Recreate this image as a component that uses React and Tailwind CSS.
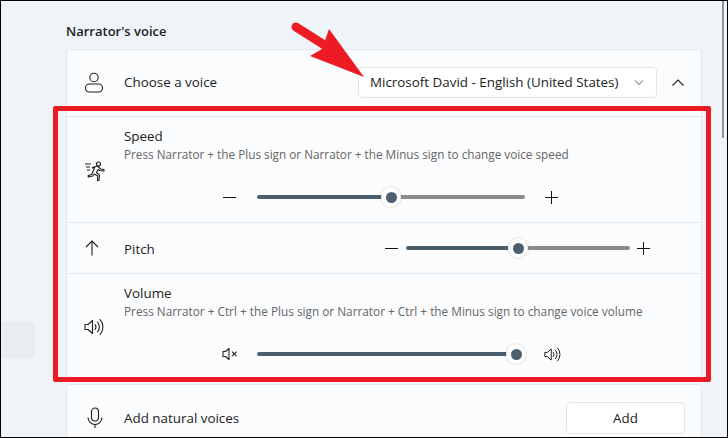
const FONT = "font-['Open_Sans','Noto_Sans',sans-serif]";

function PersonIcon() {
  return (
    <svg width="20" height="22" viewBox="0 0 20 22" fill="none" stroke="#1f1f1f" strokeWidth="1.1">
      <circle cx="10" cy="5.5" r="4.2" />
      <rect x="1.5" y="12" width="17" height="8" rx="4" />
    </svg>
  );
}

function RunIcon() {
  return (
    <svg width="22" height="20" viewBox="0 0 22 20" fill="none" stroke="#1f1f1f" strokeWidth="1.1" strokeLinejoin="round">
      <circle cx="14.5" cy="3" r="2" />
      <path d="M8.500 6.500l5-1.500 3 3 3.500.5v1.500l-4.500-.5-1.500-1-1.500 3 3 2.500-.5 5.500h-1.500l.2-4.500-3.500-2-1.500 2-4.500 1v-1.500l3.500-1 3-7-2.500.5z" />
      <path d="M1 3h6M2 6h4M3 9h3" />
    </svg>
  );
}

function SpeakerIcon({ size = 20, stroke = "#1f1f1f" }) {
  return (
    <svg width={size} height={size} viewBox="0 0 20 20" fill="none" stroke={stroke} strokeWidth="1.100">
      <path d="M1 7.500h3l4.500-4v13l-4.500-4h-3z" strokeLinejoin="round" />
      <path d="M11 7.500a4 4 0 0 1 0 5M13.500 5a7.500 7.500 0 0 1 0 10M16 2.500a11 11 0 0 1 0 15" strokeLinecap="round" />
    </svg>
  );
}

function MuteIcon() {
  return (
    <svg width="16" height="16" viewBox="0 0 16 16" fill="none" stroke="#1f1f1f" strokeWidth="1.100">
      <path d="M1 5.500h2.500L7 2.500v11l-3.500-3H1z" strokeLinejoin="round" />
      <path d="M10 5.700l4.500 4.500M14.500 5.700L10 10.200" />
    </svg>
  );
}

function MicIcon() {
  return (
    <svg width="16" height="22" viewBox="0 0 16 22" fill="none" stroke="#1f1f1f" strokeWidth="1.100">
      <rect x="4.500" y="1" width="7" height="13" rx="3.500" />
      <path d="M1 10.500a7 7 0 0 0 14 0M8 17.500V21" />
    </svg>
  );
}

function Slider({ width, value, fill = "bg-[#4c5f6e]", rest = "bg-[#8b8b8b]" }) {
  return (
    <div className="relative flex h-[22px] shrink-0 items-center" style={{ width }}>
      <div className="flex h-1 w-full overflow-hidden rounded-full">
        <div className={fill} style={{ width: value }} />
        <div className={"flex-1 " + rest} />
      </div>
      <div
        className="absolute top-px flex h-5 w-5 -translate-x-1/2 items-center justify-center rounded-full bg-white shadow-[0_0_2px_rgba(0,0,0,0.25)]"
        style={{ left: value }}
      >
        <div className="h-[11px] w-[11px] rounded-full bg-[#4c5f6e]" />
      </div>
    </div>
  );
}

function Minus() {
  return <div className="h-px w-[13px] shrink-0 bg-[#111]" />;
}

function Plus() {
  return (
    <svg className="shrink-0" width="13" height="13" viewBox="0 0 13 13" stroke="#111" strokeWidth="1">
      <path d="M0 6.500h13M6.500 0v13" />
    </svg>
  );
}

export default function App() {
  return (
    <div className={"relative h-[438px] w-[728px] overflow-hidden border border-black bg-[#eff4f9] " + FONT}>
      {/* sidebar leftover */}
      <div className="absolute left-0 top-[321px] h-9 w-[34px] rounded-r bg-[#e9edf2]" />
      {/* scrollbar */}
      <div className="absolute right-[3px] top-0 h-[137px] w-[2px] bg-[#90969c]" />

      <div className="ml-[65px] mr-[25px] pt-[21px]">
        <h2 className="mb-[9px] text-[13px] leading-[18px] font-semibold text-[#222]">Narrator's voice</h2>

        <div className="rounded border border-[#e3e8ec] bg-[#fbfcfe]">
          {/* choose a voice */}
          <div className="flex h-[66px] items-center pb-[1px] pl-[17px] pr-[15px]">
            <div className="w-10 shrink-0"><PersonIcon /></div>
            <span className="text-[13.4px] text-[#222]">Choose a voice</span>
            <button className="ml-auto flex h-[31px] w-[299px] items-center justify-between rounded border border-[#e5e5e5] bg-white pl-[11px] pr-[12px] text-[13.4px] text-[#222]">
              Microsoft David - English (United States)
              <svg width="10" height="6" viewBox="0 0 10 6" fill="none" stroke="#555" strokeWidth="1"><path d="M1 .5l4 4 4-4" /></svg>
            </button>
            <svg className="ml-[15px] mr-[2px]" width="12" height="7" viewBox="0 0 12 7" fill="none" stroke="#222" strokeWidth="1.100"><path d="M.5 6.500l5.500-5.500 5.500 5.500" /></svg>
          </div>

          {/* speed */}
          <div className="h-[106px] border-t border-[#e3e8ec] pl-[17px] pt-[10px]">
            <div className="flex">
              <div className="w-10 shrink-0 pt-[34px]"><RunIcon /></div>
              <div>
                <div className="text-[13.4px] leading-[18px] text-[#222]">Speed</div>
                <div className="text-[11.75px] leading-[18px] text-[#666]">Press Narrator + the Plus sign or Narrator + the Minus sign to change voice speed</div>
              </div>
            </div>
            <div className="ml-[139px] mt-[5px] flex items-center gap-5">
              <Minus />
              <div className="ml-px"><Slider width={268} value={134} /></div>
              <Plus />
            </div>
          </div>

          {/* pitch */}
          <div className="flex h-[51px] items-center border-t border-[#e3e8ec] pl-[17px] pr-[51px]">
            <div className="w-10 shrink-0 pl-px">
              <svg width="14" height="16" viewBox="0 0 14 16" fill="none" stroke="#1f1f1f" strokeWidth="1.100"><path d="M7 15.500V1M1 7l6-6 6 6" /></svg>
            </div>
            <span className="pt-[2px] text-[13.4px] text-[#222]">Pitch</span>
            <div className="ml-auto flex items-center gap-2">
              <Minus />
              <Slider width={224} value={112} />
              <div className="-ml-px"><Plus /></div>
            </div>
          </div>

          {/* volume */}
          <div className="h-[104px] border-t border-[#e3e8ec] pl-[17px] pt-[10px]">
            <div className="flex">
              <div className="w-10 shrink-0 pt-[33px]"><SpeakerIcon /></div>
              <div>
                <div className="text-[13.4px] leading-[18px] text-[#222]">Volume</div>
                <div className="text-[11.8px] leading-[18px] text-[#666]">Press Narrator + Ctrl + the Plus sign or Narrator + Ctrl + the Minus sign to change voice volume</div>
              </div>
            </div>
            <div className="ml-[138px] mt-[6px] flex items-center">
              <MuteIcon />
              <div className="ml-[19px]"><Slider width={259} value={259} /></div>
              <div className="ml-[28px]"><SpeakerIcon size={17} stroke="#111" /></div>
            </div>
          </div>
        </div>

        {/* natural voices */}
        <div className="mt-[6px] flex h-[70px] items-start rounded-t border border-[#e3e8ec] bg-[#fbfcfe] pl-[20px] pr-[16px] pt-[22px]">
          <div className="w-[37px] shrink-0"><MicIcon /></div>
          <span className="text-[13.4px] leading-[22px] text-[#222]">Add natural voices</span>
          <button className="ml-auto -mt-[5px] h-[32px] w-[119px] rounded border border-[#e5e5e5] bg-white text-[13.4px] text-[#222]">Add</button>
        </div>
      </div>

      {/* annotation: red box and arrow */}
      <div className="absolute left-[52px] top-[105px] h-[276px] w-[658px] rounded-[2px] border-[5px] border-[#ed1c24]" />
      <svg className="absolute left-[285px] top-[15px]" width="90" height="65" viewBox="0 0 90 65" fill="#ed1c24">
        <path d="M10 11L40 30" stroke="#ed1c24" strokeWidth="9" strokeLinecap="round" />
        <path d="M43 13L78 61L24 40L36 33z" />
      </svg>
    </div>
  );
}
